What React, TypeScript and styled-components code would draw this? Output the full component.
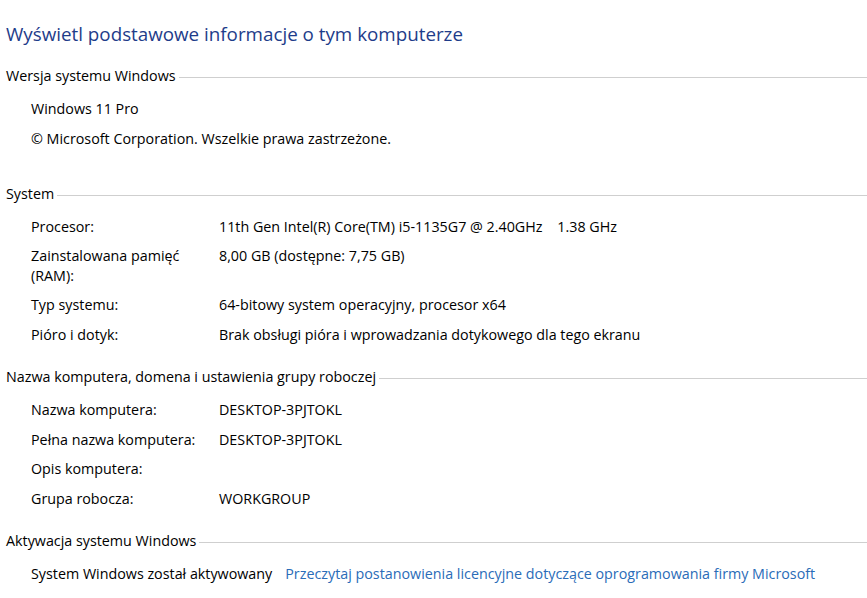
import styled, { createGlobalStyle } from 'styled-components';

const GlobalStyle = createGlobalStyle`
  body {
    margin: 0;
    background: #ffffff;
    font-family: "Open Sans", "Noto Sans", sans-serif;
    color: #000000;
  }
`;

type Row = { label: string; value?: string };

const systemRows: Row[] = [
  { label: 'Procesor:', value: '11th Gen Intel(R) Core(TM) i5-1135G7 @ 2.40GHz    1.38 GHz' },
  { label: 'Zainstalowana pamięć (RAM):', value: '8,00 GB (dostępne: 7,75 GB)' },
  { label: 'Typ systemu:', value: '64-bitowy system operacyjny, procesor x64' },
  { label: 'Pióro i dotyk:', value: 'Brak obsługi pióra i wprowadzania dotykowego dla tego ekranu' },
];

const computerRows: Row[] = [
  { label: 'Nazwa komputera:', value: 'DESKTOP-3PJTOKL' },
  { label: 'Pełna nazwa komputera:', value: 'DESKTOP-3PJTOKL' },
  { label: 'Opis komputera:' },
  { label: 'Grupa robocza:', value: 'WORKGROUP' },
];

const App = () => {
  return (
    <Page>
      <GlobalStyle />
      <Title>Wyświetl podstawowe informacje o tym komputerze</Title>

      <Section $extra={13}>
        <SectionHeader>
          <span>Wersja systemu Windows</span>
        </SectionHeader>
        <Line>Windows 11 Pro</Line>
        <Line>© Microsoft Corporation. Wszelkie prawa zastrzeżone.</Line>
      </Section>

      <Section>
        <SectionHeader>
          <span>System</span>
        </SectionHeader>
        {systemRows.map((r) => (
          <InfoRow key={r.label}>
            <Label>{r.label}</Label>
            <Value>{r.value}</Value>
          </InfoRow>
        ))}
      </Section>

      <Section>
        <SectionHeader>
          <span>Nazwa komputera, domena i ustawienia grupy roboczej</span>
        </SectionHeader>
        {computerRows.map((r) => (
          <InfoRow key={r.label}>
            <Label>{r.label}</Label>
            <Value>{r.value}</Value>
          </InfoRow>
        ))}
      </Section>

      <Section>
        <SectionHeader>
          <span>Aktywacja systemu Windows</span>
        </SectionHeader>
        <ActivationRow>
          <span>System Windows został aktywowany</span>
          <Link href="#">Przeczytaj postanowienia licencyjne dotyczące oprogramowania firmy Microsoft</Link>
        </ActivationRow>
      </Section>
    </Page>
  );
};

const Page = styled.div`
  width: 867px;
  height: 598px;
  overflow: hidden;
  padding: 20px 0 0 0;
  box-sizing: border-box;
  font-size: 14.3px;
`;

const Title = styled.h1`
  margin: 0 0 17.5px 6px;
  font-weight: 400;
  font-size: 18.8px;
  line-height: 28px;
  color: #1e3c8a;
`;

const Section = styled.section<{ $extra?: number }>`
  margin-bottom: ${(p) => 18 + (p.$extra ?? 0)}px;
`;

const SectionHeader = styled.div`
  display: flex;
  align-items: center;
  gap: 3px;
  padding-left: 6px;
  margin-bottom: 8.5px;
  line-height: 19px;
  white-space: nowrap;

  &::after {
    content: '';
    flex: 1;
    height: 1px;
    margin-top: 4px;
    background: #cfcfcf;
  }
`;

const Line = styled.div`
  padding: 6px 0 5px 31px;
  line-height: 19px;
`;

const InfoRow = styled.div`
  display: grid;
  grid-template-columns: 188px 1fr;
  padding: 5px 0 5px 31px;
  line-height: 19.6px;
`;

const Label = styled.div`
  padding-right: 20px;
`;

const Value = styled.div`
  white-space: pre;
`;

const ActivationRow = styled.div`
  display: flex;
  gap: 13px;
  padding: 5px 0 5px 31px;
  line-height: 19px;
  white-space: nowrap;
`;

const Link = styled.a`
  color: #2a6cb8;
  text-decoration: none;
`;

export default App;
